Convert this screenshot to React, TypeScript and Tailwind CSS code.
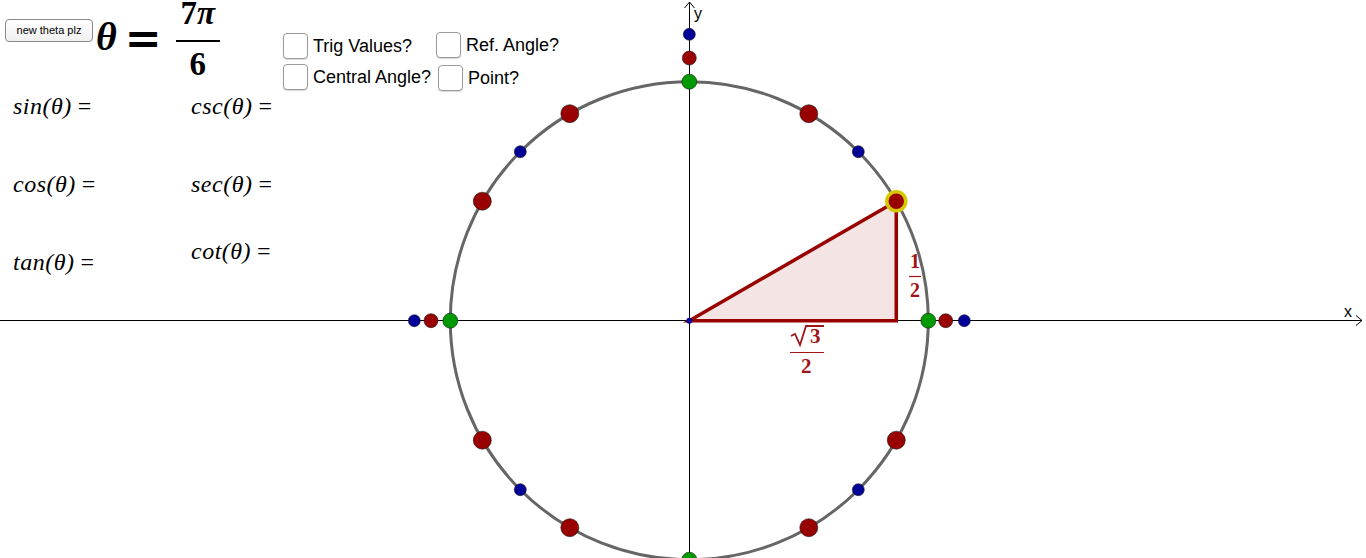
import React from "react";

const CX = 689.3;
const CY = 320.7;
const R = 239;

const serif = { fontFamily: '"Liberation Serif", "DejaVu Serif", serif' };
const dejavu = { fontFamily: '"DejaVu Serif", "Liberation Serif", serif' };

function onCircle(deg: number) {
  const a = (deg * Math.PI) / 180;
  return { x: CX + R * Math.cos(a), y: CY - R * Math.sin(a) };
}

const redAngles = [60, 120, 150, 210, 240, 300, 330];
const blueAngles = [45, 135, 225, 315];
const greenAngles = [0, 90, 180, 270];

function Dot({ x, y, r, fill }: { x: number; y: number; r: number; fill: string }) {
  return <circle cx={x} cy={y} r={r} fill={fill} stroke="#1a1a1a" strokeOpacity={0.6} strokeWidth={1} />;
}

function Graph() {
  const tip = onCircle(30);
  return (
    <svg className="absolute inset-0" width={1366} height={558} viewBox="0 0 1366 558">
      {/* axes */}
      <line x1={0} y1={320.5} x2={1362} y2={320.5} stroke="#000" strokeWidth={1} />
      <path d="M1356 315.5 L1362 320.5 L1356 325.5" fill="none" stroke="#000" strokeWidth={1} />
      <text x={1344} y={317} fontSize={16} fill="#000" style={{ fontFamily: '"Liberation Sans", Arial, sans-serif' }}>
        x
      </text>
      <line x1={689.5} y1={2} x2={689.5} y2={558} stroke="#000" strokeWidth={1} />
      <path d="M684.5 8 L689.5 2 L694.5 8" fill="none" stroke="#000" strokeWidth={1} />
      <text x={694} y={19} fontSize={16} fill="#000" style={{ fontFamily: '"Liberation Sans", Arial, sans-serif' }}>
        y
      </text>

      {/* unit circle */}
      <circle cx={CX} cy={CY} r={R} fill="none" stroke="#666" strokeWidth={3} />

      {/* reference triangle */}
      <polygon
        points={`${CX},${CY} ${tip.x},${tip.y} ${tip.x},${CY}`}
        fill="#f4e4e4"
        stroke="#990000"
        strokeWidth={3.5}
      />

      {/* points */}
      {redAngles.map((d) => {
        const p = onCircle(d);
        return <Dot key={"r" + d} x={p.x} y={p.y} r={9} fill="#990000" />;
      })}
      {blueAngles.map((d) => {
        const p = onCircle(d);
        return <Dot key={"b" + d} x={p.x} y={p.y} r={6} fill="#000099" />;
      })}
      {greenAngles.map((d) => {
        const p = onCircle(d);
        return <Dot key={"g" + d} x={p.x} y={p.y} r={7.5} fill="#009900" />;
      })}
      <Dot x={945.7} y={CY} r={7} fill="#990000" />
      <Dot x={964.3} y={CY} r={6} fill="#000099" />
      <Dot x={431} y={CY} r={7} fill="#990000" />
      <Dot x={414.3} y={CY} r={6} fill="#000099" />
      <Dot x={689.3} y={58} r={7} fill="#990000" />
      <Dot x={689.3} y={34.3} r={6} fill="#000099" />
      <circle cx={CX} cy={CY} r={3} fill="#000099" />

      {/* highlighted point */}
      <circle cx={tip.x} cy={tip.y} r={9.5} fill="#990000" stroke="#d6c800" strokeWidth={3.5} />

      {/* 1/2 label */}
      <g fill="#a01515" style={serif} fontWeight={700} fontSize={20} textAnchor="middle">
        <text x={915} y={268}>1</text>
        <line x1={909} y1={276.5} x2={921} y2={276.5} stroke="#a01515" strokeWidth={1.2} />
        <text x={915} y={297}>2</text>
      </g>

      {/* sqrt3/2 label */}
      <g fill="#a01515" style={serif} fontWeight={700} fontSize={21}>
        <path d="M791 336 L795 334 L800 345 L806 326 L824 326" fill="none" stroke="#a01515" strokeWidth={1.8} />
        <text x={810} y={343}>3</text>
        <line x1={790} y1={352.5} x2={824} y2={352.5} stroke="#a01515" strokeWidth={1.2} />
        <text x={801} y={373}>2</text>
      </g>
    </svg>
  );
}

function Box() {
  return <span className="block w-[25px] h-[26px] rounded-[4px] border border-[#9a9a9a] bg-white shadow-[0_1px_1px_rgba(0,0,0,0.15)]" />;
}

function Check({ label, className = "" }: { label: string; className?: string }) {
  return (
    <label className={`flex items-center gap-[5px] ${className}`}>
      <Box />
      <span className="text-[18px] text-black leading-none">{label}</span>
    </label>
  );
}

function TrigLabel({ fn }: { fn: string }) {
  return (
    <span className="block text-[24px] leading-none italic text-black whitespace-nowrap tracking-[0.5px]" style={serif}>
      {fn}(θ)<span className="not-italic ml-[6px]">=</span>
    </span>
  );
}

export default function App() {
  return (
    <div className="relative w-[1366px] h-[558px] bg-white overflow-hidden" style={{ fontFamily: '"Liberation Sans", Arial, sans-serif' }}>
      <Graph />
      <div className="relative flex flex-col">
        <div className="flex items-start h-[92px]">
          <button className="ml-[5px] mt-[19px] w-[88px] h-[23px] rounded-[4px] border border-[#8a8a8a] bg-gradient-to-b from-white to-[#f0f0f0] text-[11px] text-black leading-none">
            new theta plz
          </button>
          <div className="flex items-start ml-[3px] w-[187px] leading-none">
            <span className="text-[40px] italic font-bold mt-[17px]" style={serif}>θ</span>
            <span className="text-[44px] font-bold mt-[17px] ml-[8px]" style={dejavu}>=</span>
            <span className="flex flex-col items-center ml-[14px] font-bold" style={serif}>
              <span className="block h-[22px] leading-[22px] text-[33px] mt-[2px]">
                7<span className="italic">π</span>
              </span>
              <span className="block w-[44px] h-[2px] bg-black mt-[16px]" />
              <span className="block h-[32px] text-[33px] mt-[6px]">6</span>
            </span>
          </div>
          <div className="grid grid-cols-[153px_auto] gap-y-[4px] mt-[33px]">
            <Check label="Trig Values?" />
            <Check label="Ref. Angle?" className="-mt-[3px]" />
            <Check label="Central Angle?" />
            <Check label="Point?" className="mt-[2px] ml-[2px]" />
          </div>
        </div>
        <div className="grid grid-cols-[178px_auto] ml-[13px] mt-[2px]">
          <div className="h-[78px]"><TrigLabel fn="sin" /></div>
          <div className="h-[78px]"><TrigLabel fn="csc" /></div>
          <div className="h-[78px]"><TrigLabel fn="cos" /></div>
          <div className="h-[78px]"><TrigLabel fn="sec" /></div>
          <div className="h-[78px]"><TrigLabel fn="tan" /></div>
          <div className="h-[78px] -mt-[11px]"><TrigLabel fn="cot" /></div>
        </div>
      </div>
    </div>
  );
}
